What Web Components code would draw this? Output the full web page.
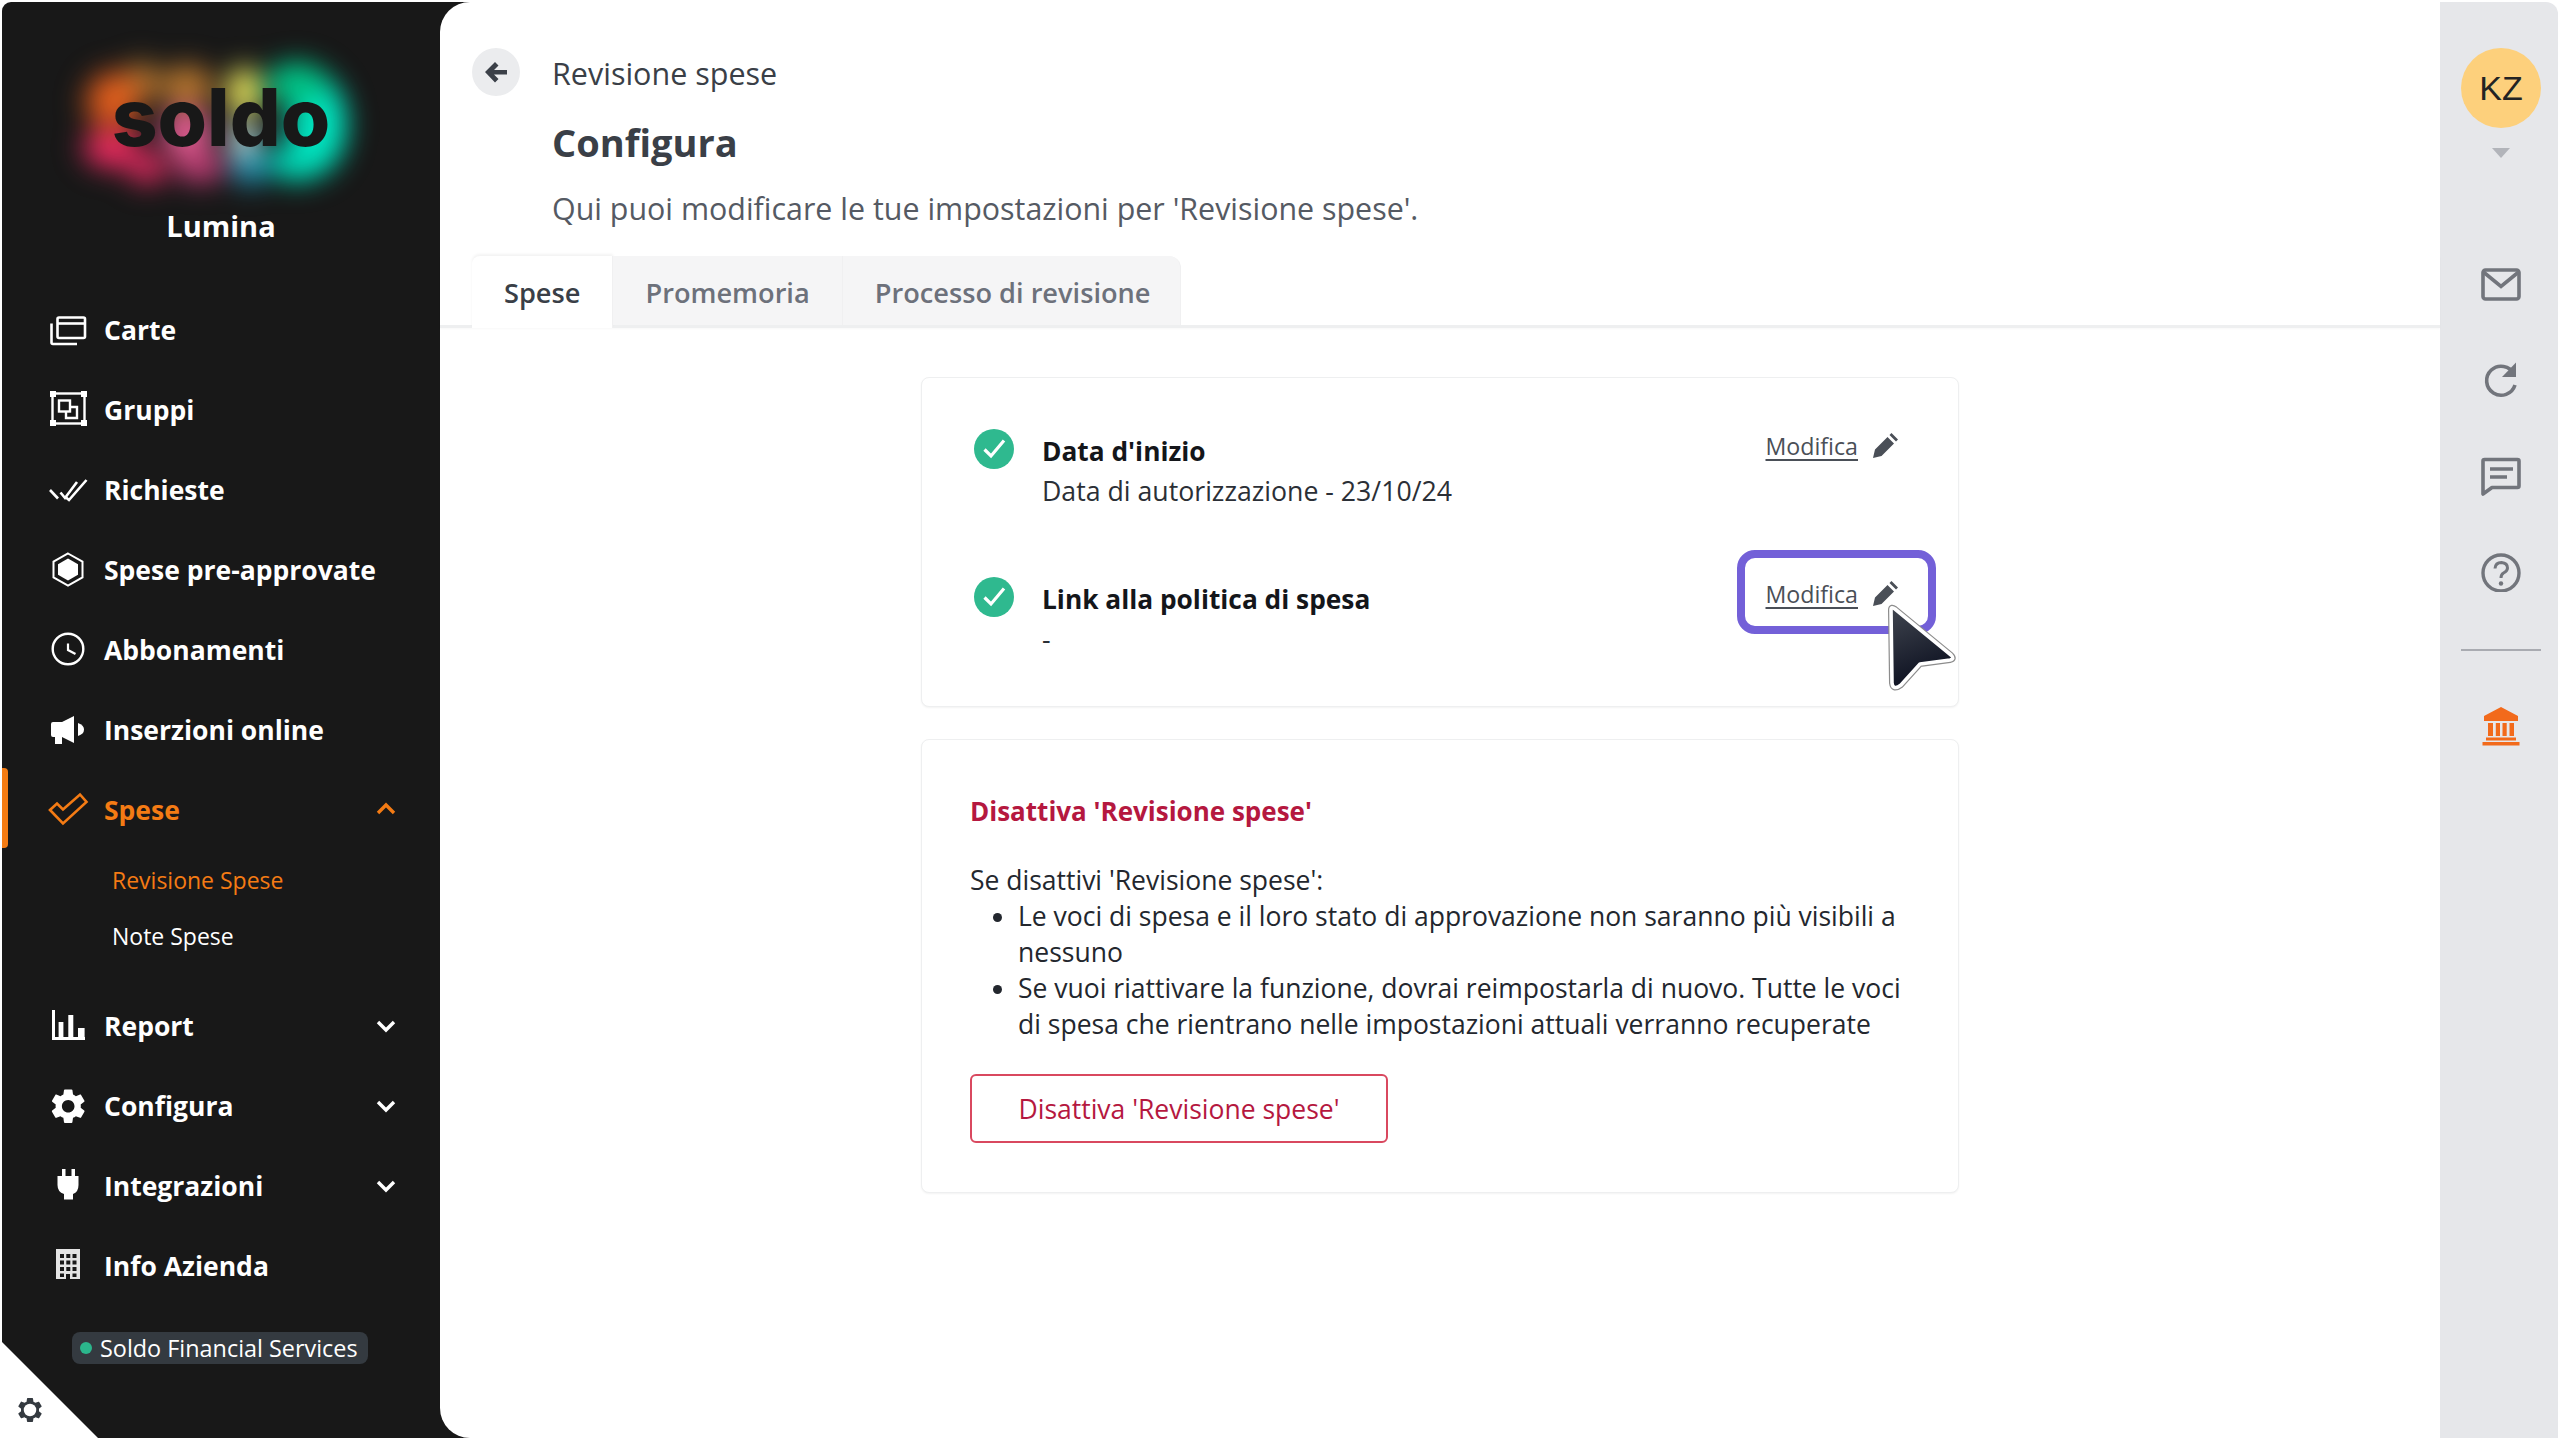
<!DOCTYPE html>
<html lang="it"><head><meta charset="utf-8"><title>Revisione spese</title>
<style>
html,body{margin:0;padding:0;background:#fff;width:2560px;height:1440px;overflow:hidden}
body{font-family:"Open Sans","Noto Sans",sans-serif;color:#23272e}
</style></head><body>
<x-app>
  <x-sidebar slot="nav" org="Lumina" badge="Soldo Financial Services">
    <x-nav-item icon="cards">Carte</x-nav-item>
    <x-nav-item icon="groups">Gruppi</x-nav-item>
    <x-nav-item icon="requests">Richieste</x-nav-item>
    <x-nav-item icon="hex">Spese pre-approvate</x-nav-item>
    <x-nav-item icon="clock">Abbonamenti</x-nav-item>
    <x-nav-item icon="mega">Inserzioni online</x-nav-item>
    <x-nav-item icon="check" chevron="up" active>Spese</x-nav-item>
    <x-nav-sub active style="margin-top:2px">Revisione Spese</x-nav-sub>
    <x-nav-sub>Note Spese</x-nav-sub>
    <x-nav-item icon="report" chevron="down" style="margin-top:22px">Report</x-nav-item>
    <x-nav-item icon="gear" chevron="down">Configura</x-nav-item>
    <x-nav-item icon="plug" chevron="down">Integrazioni</x-nav-item>
    <x-nav-item icon="building">Info Azienda</x-nav-item>
  </x-sidebar>
  <x-main slot="main">
    <x-page-head crumb="Revisione spese" heading="Configura" sub="Qui puoi modificare le tue impostazioni per 'Revisione spese'."></x-page-head>
    <x-tabs>
      <x-tab active>Spese</x-tab>
      <x-tab>Promemoria</x-tab>
      <x-tab>Processo di revisione</x-tab>
    </x-tabs>
    <x-content>
      <x-card style="--pad:55px 59px 45px 52px">
        <x-check-row heading="Data d'inizio" value="Data di autorizzazione - 23/10/24"></x-check-row>
        <x-check-row heading="Link alla politica di spesa" value="-" highlight style="margin-top:68px"></x-check-row>
      </x-card>
      <x-disable-card></x-disable-card>
    </x-content>
  </x-main>
  <x-rail slot="rail" initials="KZ">
    <x-rail-btn icon="mail"></x-rail-btn>
    <x-rail-btn icon="refresh"></x-rail-btn>
    <x-rail-btn icon="chat"></x-rail-btn>
    <x-rail-btn icon="help"></x-rail-btn>
    <x-rail-btn icon="bank" divided></x-rail-btn>
  </x-rail>
</x-app>
<script>
const GEAR='M19.14 12.94c.04-.3.06-.61.06-.94 0-.32-.02-.64-.07-.94l2.03-1.58c.18-.14.23-.41.12-.61l-1.92-3.32c-.12-.22-.37-.29-.59-.22l-2.39.96c-.5-.38-1.03-.7-1.62-.94l-.36-2.54c-.04-.24-.24-.41-.48-.41h-3.84c-.24 0-.43.17-.47.41l-.36 2.54c-.59.24-1.13.57-1.62.94l-2.39-.96c-.22-.08-.47 0-.59.22L2.74 8.87c-.12.21-.08.47.12.61l2.03 1.58c-.05.3-.09.63-.09.94s.02.64.07.94l-2.03 1.58c-.18.14-.23.41-.12.61l1.92 3.32c.12.22.37.29.59.22l2.39-.96c.5.38 1.03.7 1.62.94l.36 2.54c.05.24.24.41.48.41h3.84c.24 0 .44-.17.47-.41l.36-2.54c.59-.24 1.13-.56 1.62-.94l2.39.96c.22.08.47 0 .59-.22l1.92-3.32c.12-.22.07-.47-.12-.61l-2.01-1.58zM12 15.6c-1.98 0-3.6-1.62-3.6-3.6s1.62-3.6 3.6-3.6 3.6 1.62 3.6 3.6-1.62 3.6-3.6 3.6z';
const NAV={
 cards:'<g fill="none" stroke="currentColor" stroke-width="2.6"><rect x="10.5" y="7.5" width="27.5" height="20.5" rx="1.5"/><path d="M10.5 13.5H38"/><path d="M4.5 13.5V32.5Q4.5 34 6 34H30"/></g>',
 groups:'<g fill="none" stroke="currentColor" stroke-width="2.4"><rect x="5.5" y="3.5" width="32" height="30"/><rect x="12" y="10.5" width="11" height="11"/><path d="M23 17H30V28H19V21.5"/></g><g fill="currentColor"><rect x="3" y="1" width="6" height="6"/><rect x="34" y="1" width="6" height="6"/><rect x="3" y="30" width="6" height="6"/><rect x="34" y="30" width="6" height="6"/></g>',
 requests:'<g fill="none" stroke="currentColor" stroke-width="2.6"><path d="M3 20L11 28.5"/><path d="M13.5 22.5L18 28L30 12"/><path d="M19 27.5L22 30L39.5 10"/></g>',
 hex:'<path d="M21 3.5L35.5 11.7V27.3L21 35.5L6.5 27.3V11.7Z" fill="none" stroke="currentColor" stroke-width="2"/><path d="M21 8.5L31 14.2V24.8L21 30.5L11 24.8V14.2Z" fill="currentColor"/>',
 clock:'<circle cx="21" cy="19" r="15.3" fill="none" stroke="currentColor" stroke-width="2.4"/><path d="M21 13.5V20L28.5 24" fill="none" stroke="currentColor" stroke-width="2.2"/>',
 mega:'<path d="M6 12H15L27 6V33L15 27H15V34H8V27H6Q4 27 4 25V14Q4 12 6 12Z" fill="currentColor"/><path d="M31 13Q37 15 37 19.5T31 26Z" fill="currentColor"/>',
 check:'<path d="M3 20L10 13.5L16 19.5L33 4.5L39.5 12L16 33.5Z" fill="none" stroke="currentColor" stroke-width="2.6" stroke-linejoin="miter"/>',
 report:'<g fill="currentColor"><path d="M5 4H8V31H38V34H5Z"/><rect x="11.6" y="16" width="4.8" height="15"/><rect x="21.3" y="9" width="5" height="22"/><rect x="31" y="22" width="6.6" height="9"/></g>',
 gear:'<g transform="translate(.2 -.8) scale(1.75)"><path fill="currentColor" d="'+GEAR+'"/></g>',
 plug:'<path fill="currentColor" d="M15 3H18.5V10H24.5V3H28V10H31.5V19Q31.5 26 26 28V33.5H17V28Q10.5 26 10.5 19V10H15Z"/>',
 building:'<path fill-rule="evenodd" fill="#e4e4e4" d="M9 3H33V33H9ZM13 8v4h4v-4ZM19.3 8v4h4v-4ZM25.5 8v4h4v-4ZM13 14.5v4h4v-4ZM19.3 14.5v4h4v-4ZM25.5 14.5v4h4v-4ZM13 21v4h4v-4ZM19.3 21v4h4v-4ZM25.5 21v4h4v-4ZM13 27.5v3.5h4v-3.5ZM19 28v5h4v-5ZM25.5 27.5v3.5h4v-3.5Z"/>'
};
const RAIL={
 mail:'<g fill="none" stroke="currentColor" stroke-width="3.6"><rect x="2" y="6" width="36" height="29" rx="2.5"/><path d="M3 8.500L20 22.500L37 8.500"/></g>',
 refresh:'<path d="M33 14A14.5 14.5 0 1 0 34 25" fill="none" stroke="currentColor" stroke-width="3.6"/><path d="M35 2.5V17H21Z" fill="currentColor"/>',
 chat:'<path d="M3.6 3.5H36.4Q38 3.5 38 5V30Q38 31.5 36.4 31.5H11L2 38V5Q2 3.5 3.6 3.5Z" fill="none" stroke="currentColor" stroke-width="3.6" stroke-linejoin="round"/><path d="M9 13H32M9 21H26" stroke="currentColor" stroke-width="3.4" fill="none"/>',
 help:'<circle cx="20" cy="21" r="18" fill="none" stroke="currentColor" stroke-width="3.4"/><path d="M14 16.500Q14.500 10.500 20.500 10.500Q26.500 11 26.500 16Q26.500 19 22.500 21Q20 22.500 20 26" fill="none" stroke="currentColor" stroke-width="3"/><circle cx="20" cy="31.500" r="2.200" fill="currentColor"/>',
 bank:'<path fill="currentColor" d="M20 1L37 10V15H3V10ZM7 17H12V30H7ZM14.800 17H19V30H14.800ZM21.500 17H25.700V30H21.500ZM28.500 17H33V30H28.500ZM5 31.500H35V34.500H5ZM1.500 36H38.500V39.500H1.500Z"/>'
};
const svg=(inner,w,h,vb)=>`<svg xmlns="http://www.w3.org/2000/svg" width="${w}" height="${h}" viewBox="${vb}" aria-hidden="true">${inner}</svg>`;
class Base extends HTMLElement{
  constructor(){super();this.attachShadow({mode:'open'});}
  connectedCallback(){this.shadowRoot.innerHTML=this.render();}
  attr(n,d=''){return this.getAttribute(n)??d;}
}
const def=(name,fn)=>customElements.define(name,class extends Base{render(){return fn(this);}});

def('x-app',()=>`<style>
:host{display:grid;grid-template-columns:438px 2000px 118px;width:2556px;height:1436px;margin:2px 0 0 2px;
 background:linear-gradient(90deg,#181818 470px,transparent 470px);border-radius:9px 12px 0 9px}
</style><slot name="nav"></slot><slot name="main"></slot><slot name="rail"></slot>`);

def('x-sidebar',h=>`<style>
:host{display:flex;flex-direction:column;position:relative;height:1436px;color:#fff;box-sizing:border-box}
.logo{height:186px;display:flex;align-items:center;justify-content:center;position:relative;overflow:visible}
.glow{position:absolute;left:50px;top:34px;width:336px;height:172px;filter:blur(13px);background:
 radial-gradient(ellipse 28px 30px at 64px 58px,#f0681e,transparent),
 radial-gradient(ellipse 36px 38px at 60px 66px,#d8561c 40%,transparent),
 radial-gradient(ellipse 38px 28px at 60px 112px,#ea2a60 45%,transparent),
 radial-gradient(ellipse 28px 24px at 95px 132px,#d82a5e 35%,transparent),
 radial-gradient(ellipse 26px 28px at 90px 46px,#b97a30 30%,transparent),
 radial-gradient(ellipse 36px 28px at 135px 50px,#b9772e 45%,transparent),
 radial-gradient(ellipse 32px 34px at 135px 96px,#e65e94 50%,transparent),
 radial-gradient(ellipse 34px 24px at 148px 130px,#b83a70 45%,transparent),
 radial-gradient(ellipse 22px 32px at 192px 56px,#e6e25c 55%,transparent),
 radial-gradient(ellipse 22px 26px at 192px 104px,#bfe0e0 35%,transparent),
 radial-gradient(ellipse 26px 26px at 198px 130px,#1f90b0 45%,transparent),
 radial-gradient(ellipse 38px 28px at 244px 48px,#00c587 55%,transparent),
 radial-gradient(ellipse 36px 58px at 266px 88px,#00e7c2 60%,transparent),
 radial-gradient(ellipse 36px 26px at 244px 126px,#00cfae 55%,transparent)}
.word{position:relative;font:800 80px/1 Inter,Lato,sans-serif;color:#181818;letter-spacing:0;margin-top:44px}
.org{height:44px;line-height:44px;text-align:center;font-weight:700;font-size:29px;margin:16px 0 42px}
nav{display:flex;flex-direction:column}
.badge{align-self:center;margin:26px 0 0 -2px;height:32px;width:296px;box-sizing:border-box;background:#343a40;border-radius:8px;font-size:23.4px;display:flex;align-items:center;gap:8px;padding-left:8px;white-space:nowrap}
.dot{width:12px;height:12px;border-radius:50%;background:#2bb68c;flex:none}
.corner{position:absolute;left:0;bottom:0;width:96px;height:96px;background:#fff;clip-path:polygon(0 0,100% 100%,0 100%)}
.cog{position:absolute;left:13px;bottom:13px;color:#343a40;width:30px;height:30px}
</style>
<div class="logo"><div class="glow"></div><div class="word">soldo</div></div>
<div class="org">${h.attr('org')}</div>
<nav><slot></slot></nav>
<div class="badge"><span class="dot"></span><span>${h.attr('badge')}</span></div>
<div class="corner"><div class="cog">${svg(`<path fill="currentColor" d="${GEAR}"/><circle cx="12" cy="12" r="5" fill="#fff"/>`,30,30,'0 0 24 24')}</div></div>`);

def('x-nav-item',h=>{
 const a=h.hasAttribute('active'),c=h.attr('chevron');
 return `<style>
:host{display:flex;align-items:center;height:80px;position:relative;color:${a?'#f47b14':'#fff'};font-size:26.5px;font-weight:700;white-space:nowrap}
.ic{width:42px;height:40px;margin-left:45px;margin-right:15px;flex:none;display:block}
.ic svg{display:block}
.lbl{flex:1}
.chev{margin-right:43px;display:block}
.bar{position:absolute;left:0;top:-2px;width:6px;height:80px;background:#f57c13;border-radius:0 4px 4px 0}
</style>${a?'<span class="bar"></span>':''}<span class="ic">${svg(NAV[h.attr('icon')]||'',42,40,'0 0 42 40')}</span><span class="lbl"><slot></slot></span>${c?svg(`<path d="${c==='up'?'M3 12L11 4L19 12':'M3 5L11 13L19 5'}" fill="none" stroke="currentColor" stroke-width="3.4"/>`,22,18,'0 0 22 18').replace('<svg','<svg class="chev"'):''}`;});

def('x-nav-sub',h=>`<style>
:host{display:block;height:56px;line-height:56px;padding-left:110px;font-size:23px;color:${h.hasAttribute('active')?'#f47b14':'#fff'}}
</style><slot></slot>`);

def('x-main',()=>`<style>
:host{display:block;position:relative;background:#fff;border-radius:30px 0 0 30px;height:1436px}
</style><slot></slot>`);

def('x-page-head',h=>`<style>
:host{display:grid;grid-template-columns:48px 1fr;column-gap:32px;padding:46px 0 0 32px;color:#3a3f47}
.back{width:48px;height:48px;border-radius:50%;background:#ebecee;display:flex;align-items:center;justify-content:center;color:#3b4048}
.crumb{height:48px;line-height:50px;font-size:30.5px}
h1{margin:22px 0 0;height:48px;line-height:48px;font-size:38px;font-weight:700;grid-column:2}
p{margin:23px 0 0;height:40px;line-height:40px;font-size:30.4px;grid-column:2;color:#555a63}
</style><div class="back">${svg('<path fill="currentColor" d="M1 12L11 2L14.500 5.500L10 10H23V14.500H10L14.500 19L11 22.500Z"/>',24,24,'0 0 24 24')}</div>
<div class="crumb">${h.attr('crumb')}</div><h1>${h.attr('heading')}</h1><p>${h.attr('sub')}</p>`);

def('x-tabs',()=>`<style>
:host{display:flex;align-items:flex-start;margin-top:27px;padding-left:32px;height:72px;box-sizing:border-box;border-bottom:3px solid #eeeff0;box-shadow:0 1px 2px rgba(0,0,0,.03)}
</style><slot></slot>`);

def('x-tab',h=>{const a=h.hasAttribute('active');return `<style>
:host{display:flex;align-items:center;height:${a?72:69}px;box-sizing:border-box;padding:${a?0:3}px 32px 0;font-size:27.2px;font-weight:600;white-space:nowrap;
 background:${a?'#fff':'#f5f5f6'};color:${a?'#3a3f47':'#6d717b'};position:relative;
 ${a?'border-radius:8px 0 0 0;box-shadow:0 -2px 3px rgba(0,0,0,.05);':''}
 border-right:1px solid #f0f0f1}
:host(:last-child){border-radius:0 12px 0 0;padding-right:29px}
</style><slot></slot>`;});

def('x-content',()=>`<style>
:host{display:flex;flex-direction:column;gap:32px;width:1038px;margin:49px auto 0}
</style><slot></slot>`);

def('x-card',h=>`<style>
:host{display:block;box-sizing:border-box;background:#fff;border-radius:8px;border:1px solid #eeeff0;box-shadow:0 1px 2px rgba(0,0,0,.05);padding:var(--pad,52px 48px)}
</style><slot></slot>`);

def('x-check-row',h=>`<style>
:host{display:grid;grid-template-columns:40px 1fr auto;column-gap:28px;color:#1d2025}
.ck{display:block;margin-top:-4px}
.txt{margin:-2px 0 2px}
.t{font-weight:700;font-size:26.3px;line-height:40px;color:#14161a}
.v{font-size:26.7px;line-height:40px;color:#2b2f36}
</style>${svg('<circle cx="20" cy="20" r="20" fill="#2fb98f"/><path d="M10.500 20.500L17 27L30 11.500" fill="none" stroke="#fff" stroke-width="3.200"/>',40,40,'0 0 40 40').replace('<svg','<svg class="ck"')}
<div class="txt"><div class="t">${h.attr('heading')}</div><div class="v">${h.attr('value')}</div></div>
<x-edit-link ${h.hasAttribute('highlight')?'highlight':''}>Modifica</x-edit-link>`);

def('x-edit-link',h=>{const hl=h.hasAttribute('highlight');const P='M6 6Q6 2 10 5L66 51Q70 55 65 56L35 60L16 81Q8 87 7 79Z';return `<style>
:host{display:flex;align-items:center;gap:15px;height:30px;margin-top:-2px;position:relative;color:#4a4f57;font-size:23.2px;align-self:start}
u{text-underline-offset:4px;text-decoration-thickness:2px}
svg{display:block}
.ring{position:absolute;left:-29px;right:-37px;top:-29px;bottom:-25px;border:8px solid #7360d8;border-radius:18px;box-sizing:border-box;pointer-events:none}
.cursor{position:absolute;left:119px;top:25px;z-index:2}
</style><u><slot></slot></u>${svg('<path fill="currentColor" d="M0 25L2 16.500L14.500 4L21 10.500L8.500 23ZM16.500 2L18.500 0L25 6.500L23 8.500Z"/>',26,26,'0 0 26 26')}
${hl?`<span class="ring"></span><svg class="cursor" xmlns="http://www.w3.org/2000/svg" width="76" height="92" viewBox="0 0 76 92"><defs><linearGradient id="g" x1="0" y1="0" x2=".3" y2="1"><stop offset="0" stop-color="#40454f"/><stop offset="1" stop-color="#0c1020"/></linearGradient></defs><path d="${P}" fill="none" stroke="#8c8c8c" stroke-width="6" stroke-linejoin="round"/><path d="${P}" fill="url(#g)" stroke="#fff" stroke-width="3.600" stroke-linejoin="round"/></svg>`:''}`;});

def('x-disable-card',()=>`<style>
:host{display:block;box-sizing:border-box;height:454px;background:#fff;border-radius:8px;border:1px solid #eeeff0;box-shadow:0 1px 2px rgba(0,0,0,.05);padding:51px 48px 0;color:#23272e;font-size:26.5px}
h2{margin:0 0 31px;font-size:26px;line-height:40px;font-weight:700;color:#b5183f}
p{margin:0;line-height:36px}
ul{margin:0 0 32px;padding:0 0 0 48px;line-height:36px}
button{display:block;font:inherit;width:418px;height:69px;background:#fff;border:2px solid #d9485f;border-radius:6px;color:#b5183f;padding:0}
</style><h2>Disattiva 'Revisione spese'</h2><p>Se disattivi 'Revisione spese':</p>
<ul><li>Le voci di spesa e il loro stato di approvazione non saranno più visibili a nessuno</li>
<li>Se vuoi riattivare la funzione, dovrai reimpostarla di nuovo. Tutte le voci di spesa che rientrano nelle impostazioni attuali verranno recuperate</li></ul>
<button>Disattiva 'Revisione spese'</button>`);

def('x-rail',h=>`<style>
:host{display:flex;flex-direction:column;align-items:center;background:#e6e7ea;border-radius:0 12px 0 0;height:1436px;padding:46px 0 0 4px;box-sizing:border-box;width:118px}
.av{width:80px;height:80px;border-radius:50%;background:#fdd07c;display:flex;align-items:center;justify-content:center;font:400 34px/1 "Liberation Sans",sans-serif;color:#232323;flex:none}
.tri{width:0;height:0;border:9px solid transparent;border-top:10px solid #b2b4ba;border-bottom:0;margin-top:20px;margin-bottom:78px}
</style><div class="av">${h.attr('initials')}</div><div class="tri"></div><slot></slot>`);

def('x-rail-btn',h=>{const b=h.attr('icon'),d=h.hasAttribute('divided');return `<style>
:host{display:flex;flex-direction:column;align-items:center;justify-content:center;width:100%;color:${b==='bank'?'#f26a1b':'#72757c'}}
.wrap{height:96px;display:flex;align-items:center}
hr{width:80px;height:2px;background:#a9abb1;border:0;margin:29px 0 0}
svg{display:block}
</style>${d?'<hr><div style="height:55px"></div>':''}<div class="${d?'':'wrap'}">${svg(RAIL[b]||'',40,40,'0 0 40 40')}</div>`;});
</script>
</body></html>
